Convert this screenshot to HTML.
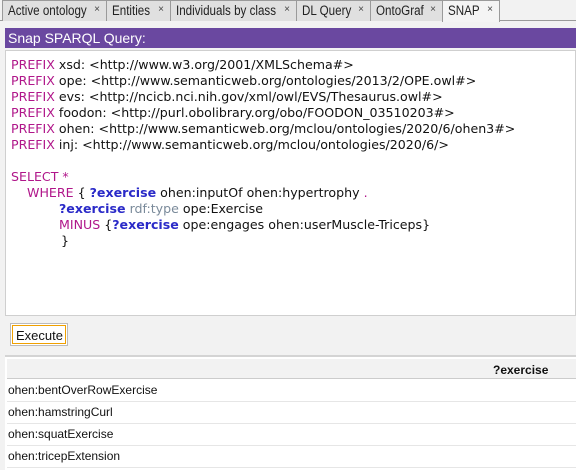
<!DOCTYPE html>
<html><head><style>
*{margin:0;padding:0;box-sizing:border-box}
body{width:576px;height:470px;background:#f2f2f2;position:relative;overflow:hidden;font-family:"DejaVu Sans","Liberation Sans",sans-serif}
.tab{position:absolute;top:0;height:21px;background:#e0e0e0;border:1px solid #9a9a9a;border-bottom:none;font:13.5px "Liberation Sans",sans-serif;color:#222;padding:2px 0 0 5px;white-space:nowrap;overflow:hidden}
.tab span{display:inline-block;transform:scaleX(0.86);transform-origin:left}
.tab b{position:absolute;right:6px;top:3px;font-size:10px;font-weight:normal;color:#444}
.sel{background:#f4f4f4}
.bar{position:absolute;left:5px;top:28px;width:571px;height:20px;background:#6a48a0;color:#fff;font:14px "Liberation Sans",sans-serif;padding:2px 0 0 3px}
.ed{position:absolute;left:5px;top:50px;width:571px;height:266px;background:#fff;border:1px solid #cfcfcf}
.l{position:absolute;left:5px;font-size:12.6px;white-space:pre;color:#111;line-height:16px}
.k{color:#b0168a}.v{color:#2a2ac8;font-weight:bold}.g{color:#7a8a9a}
.btn{position:absolute;left:10px;top:323px;width:58px;height:23px;border:1px solid #bbb;background:#fff}
.btn div{position:absolute;left:1px;top:1px;right:1px;bottom:1px;border:1px solid #f0a000;font:13px "Liberation Sans",sans-serif;padding:2px 0 0 3px;color:#111}
.tbl{position:absolute;left:5px;top:355px;width:571px;height:115px;background:#fff;border-top:2px solid #d4d4d4}
.hd{position:absolute;left:2px;top:2px;right:0;height:20px;background:#f2f2f2;border-bottom:1px solid #ccc;font:bold 12px "Liberation Sans",sans-serif;padding:4px 0 0 486px;color:#111}
.r{position:absolute;left:2px;right:0;height:22px;border-bottom:1px solid #e6e6e6;font:12px "Liberation Sans",sans-serif;padding:3px 0 0 1px;color:#111}
</style></head><body>
<div style="position:absolute;left:0;top:20px;width:576px;height:1px;background:#9a9a9a"></div>
<div class="tab" style="left:2px;width:105px"><span>Active ontology</span><b>×</b></div>
<div class="tab" style="left:106px;width:65px"><span>Entities</span><b>×</b></div>
<div class="tab" style="left:170px;width:127px"><span>Individuals by class</span><b>×</b></div>
<div class="tab" style="left:296px;width:75px"><span>DL Query</span><b>×</b></div>
<div class="tab" style="left:370px;width:73px"><span>OntoGraf</span><b>×</b></div>
<div class="tab sel" style="left:442px;width:58px;height:22px"><span>SNAP</span><b>×</b></div>
<div class="bar">Snap SPARQL Query:</div>
<div class="ed">
<div class="l" style="top:6px"><span class="k">PREFIX</span> xsd: &lt;http://www.w3.org/2001/XMLSchema#&gt;</div>
<div class="l" style="top:22px"><span class="k">PREFIX</span> ope: &lt;http://www.semanticweb.org/ontologies/2013/2/OPE.owl#&gt;</div>
<div class="l" style="top:38px"><span class="k">PREFIX</span> evs: &lt;http://ncicb.nci.nih.gov/xml/owl/EVS/Thesaurus.owl#&gt;</div>
<div class="l" style="top:54px"><span class="k">PREFIX</span> foodon: &lt;http://purl.obolibrary.org/obo/FOODON_03510203#&gt;</div>
<div class="l" style="top:70px"><span class="k">PREFIX</span> ohen: &lt;http://www.semanticweb.org/mclou/ontologies/2020/6/ohen3#&gt;</div>
<div class="l" style="top:86px"><span class="k">PREFIX</span> inj: &lt;http://www.semanticweb.org/mclou/ontologies/2020/6/&gt;</div>
<div class="l" style="top:118px"><span class="k">SELECT *</span></div>
<div class="l" style="top:134px;left:21px"><span class="k">WHERE</span> { <span class="v">?exercise</span> ohen:inputOf ohen:hypertrophy <span class="k">.</span></div>
<div class="l" style="top:150px;left:53px"><span class="v">?exercise</span> <span class="g">rdf:type</span> ope:Exercise</div>
<div class="l" style="top:166px;left:53px"><span class="k">MINUS</span> {<span class="v">?exercise</span> ope:engages ohen:userMuscle-Triceps}</div>
<div class="l" style="top:182px;left:55px">}</div>
</div>
<div class="btn"><div>Execute</div></div>
<div class="tbl">
<div class="hd">?exercise</div>
<div class="r" style="top:23px">ohen:bentOverRowExercise</div>
<div class="r" style="top:45px">ohen:hamstringCurl</div>
<div class="r" style="top:67px">ohen:squatExercise</div>
<div class="r" style="top:89px">ohen:tricepExtension</div>
</div>
</body></html>
